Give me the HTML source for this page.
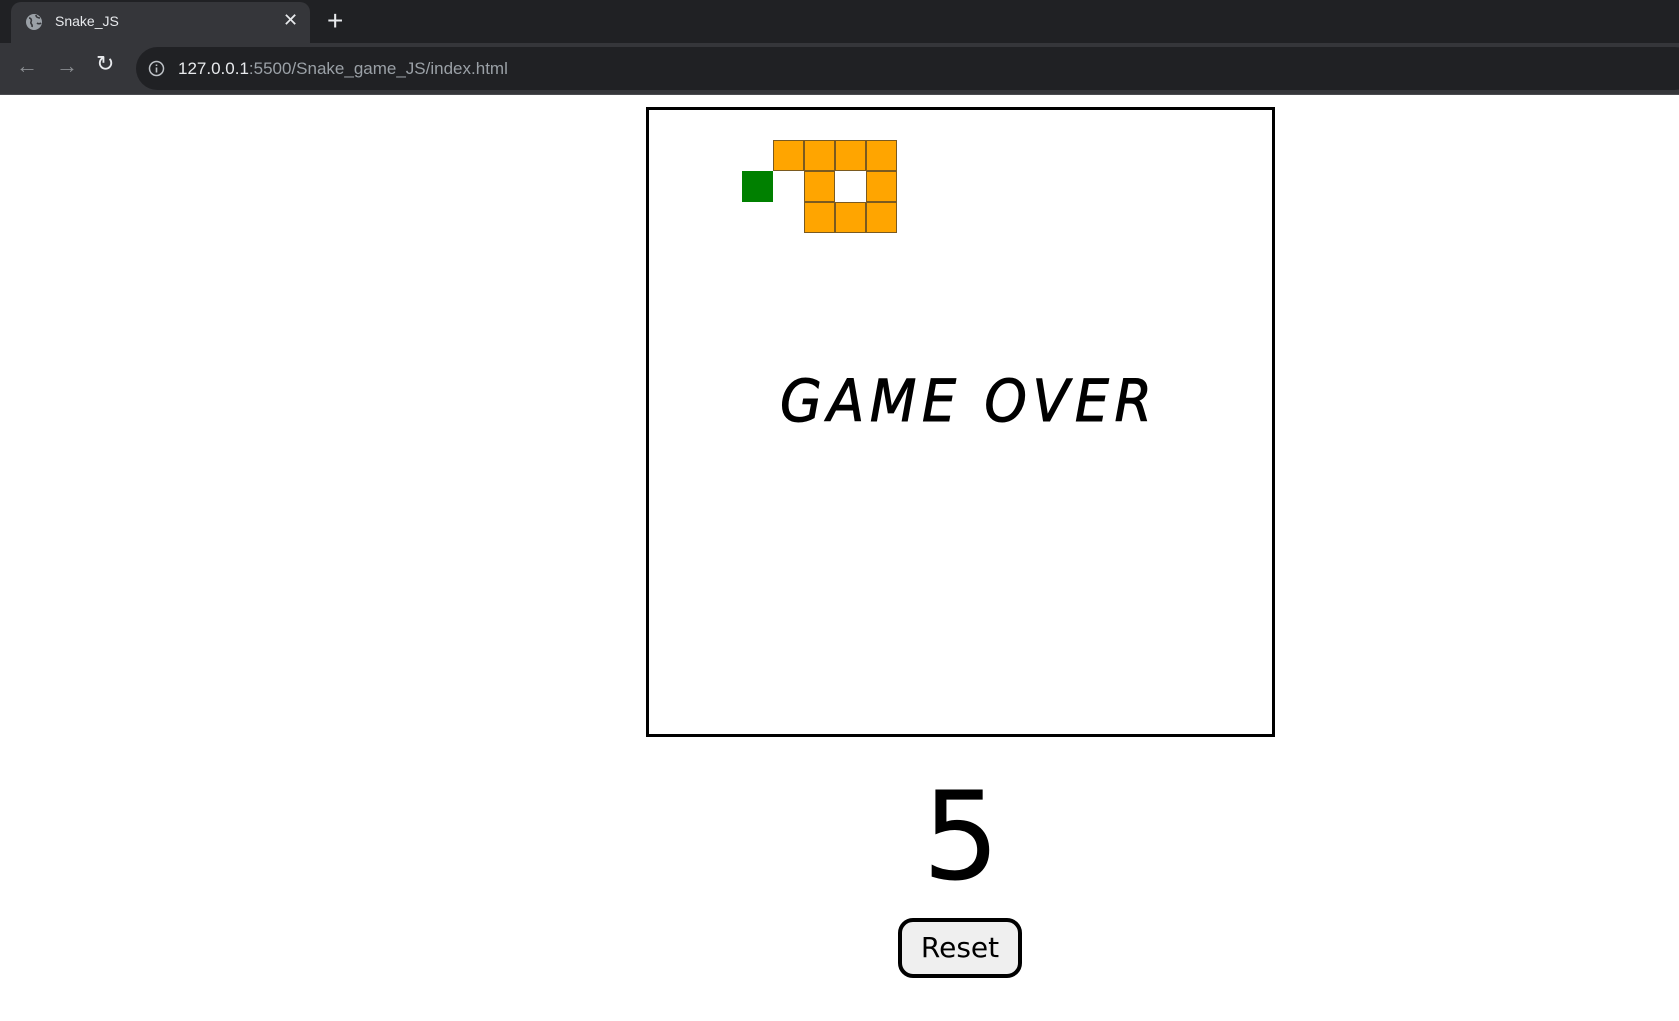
<!DOCTYPE html>
<html><head><style>
*{margin:0;padding:0;box-sizing:border-box}
body{width:1679px;height:1021px;background:#fff;position:relative;overflow:hidden;font-family:"Liberation Sans",sans-serif}
.tabbar{position:absolute;left:0;top:0;width:1679px;height:43px;background:#202124}
.tab{position:absolute;left:11px;top:2px;width:299px;height:41px;background:#35363a;border-radius:10px 10px 0 0}
.toolbar{position:absolute;left:0;top:43px;width:1679px;height:52px;background:#35363a;border-bottom:1px solid #4a4b4f}
.url{position:absolute;left:136px;top:4px;width:1560px;height:43px;background:#202124;border-radius:22px}
.abs{position:absolute}
.cv{position:absolute;left:646px;top:107px;width:629px;height:630px;border:3px solid #000}
.c{position:absolute;width:31px;height:31px;background:#ffa500;border:1px solid #7a5a20}
.go{position:absolute;left:780px;top:367px;font:italic 58px "Comic Sans MS","DejaVu Sans",sans-serif;letter-spacing:6px;white-space:nowrap;color:#000;-webkit-text-stroke:1px #000;transform:scaleX(0.93);transform-origin:left}
.score{position:absolute;left:0;width:1922px;text-align:center;top:766px;font:122px "Comic Sans MS","DejaVu Sans",sans-serif;color:#000}
.btn{position:absolute;left:898px;top:918px;width:124px;height:60px;border:4px solid #000;border-radius:15px;background:#efefef;font:28px "Comic Sans MS","DejaVu Sans",sans-serif;text-align:center;line-height:52px}
</style></head><body>
<div class="tabbar"><div class="tab">
<svg class="abs" style="left:14px;top:11px" width="18" height="18" viewBox="0 0 18 18"><circle cx="9" cy="9" r="8" fill="#9aa0a6"/><path d="M4 5c2 0 3 2 2 4s2 2 1 5M11 2c0 2 2 3 4 3M12 10c1 1 3 1 4 0" stroke="#35363a" stroke-width="1.6" fill="none"/></svg>
<div class="abs" style="left:44px;top:11px;color:#e8eaed;font-size:14px">Snake_JS</div>
<div class="abs" style="left:272px;top:8px;color:#e8eaed;font-size:18px">✕</div>
</div>
<div class="abs" style="left:327px;top:5px;color:#e8eaed;font-size:28px;font-weight:300">+</div>
</div>
<div class="toolbar">
<div class="abs" style="left:16px;top:10px;color:#8a8d91;font-size:22px">←</div>
<div class="abs" style="left:56px;top:10px;color:#8a8d91;font-size:22px">→</div>
<div class="abs" style="left:96px;top:8px;color:#e8eaed;font-size:22px">↻</div>
<div class="url">
<svg class="abs" style="left:12px;top:13px" width="17" height="17" viewBox="0 0 17 17"><circle cx="8.5" cy="8.5" r="7" stroke="#bdc1c6" stroke-width="1.5" fill="none"/><path d="M8.5 7.5v5M8.5 4.5v1.5" stroke="#bdc1c6" stroke-width="1.6"/></svg>
<div class="abs" style="left:42px;top:12px;font-size:17px;color:#e8eaed">127.0.0.1<span style="color:#9aa0a6">:5500/Snake_game_JS/index.html</span></div>
</div></div>
<div class="cv"></div>
<div class="abs" style="left:742px;top:171px;width:31px;height:31px;background:#008000"></div>
<div class="c" style="left:773px;top:140px"></div>
<div class="c" style="left:804px;top:140px"></div>
<div class="c" style="left:835px;top:140px"></div>
<div class="c" style="left:866px;top:140px"></div>
<div class="c" style="left:804px;top:171px"></div>
<div class="c" style="left:866px;top:171px"></div>
<div class="c" style="left:804px;top:202px"></div>
<div class="c" style="left:835px;top:202px"></div>
<div class="c" style="left:866px;top:202px"></div>
<div class="go">GAME OVER</div>
<div class="score">5</div>
<div class="btn">Reset</div>
</body></html>
